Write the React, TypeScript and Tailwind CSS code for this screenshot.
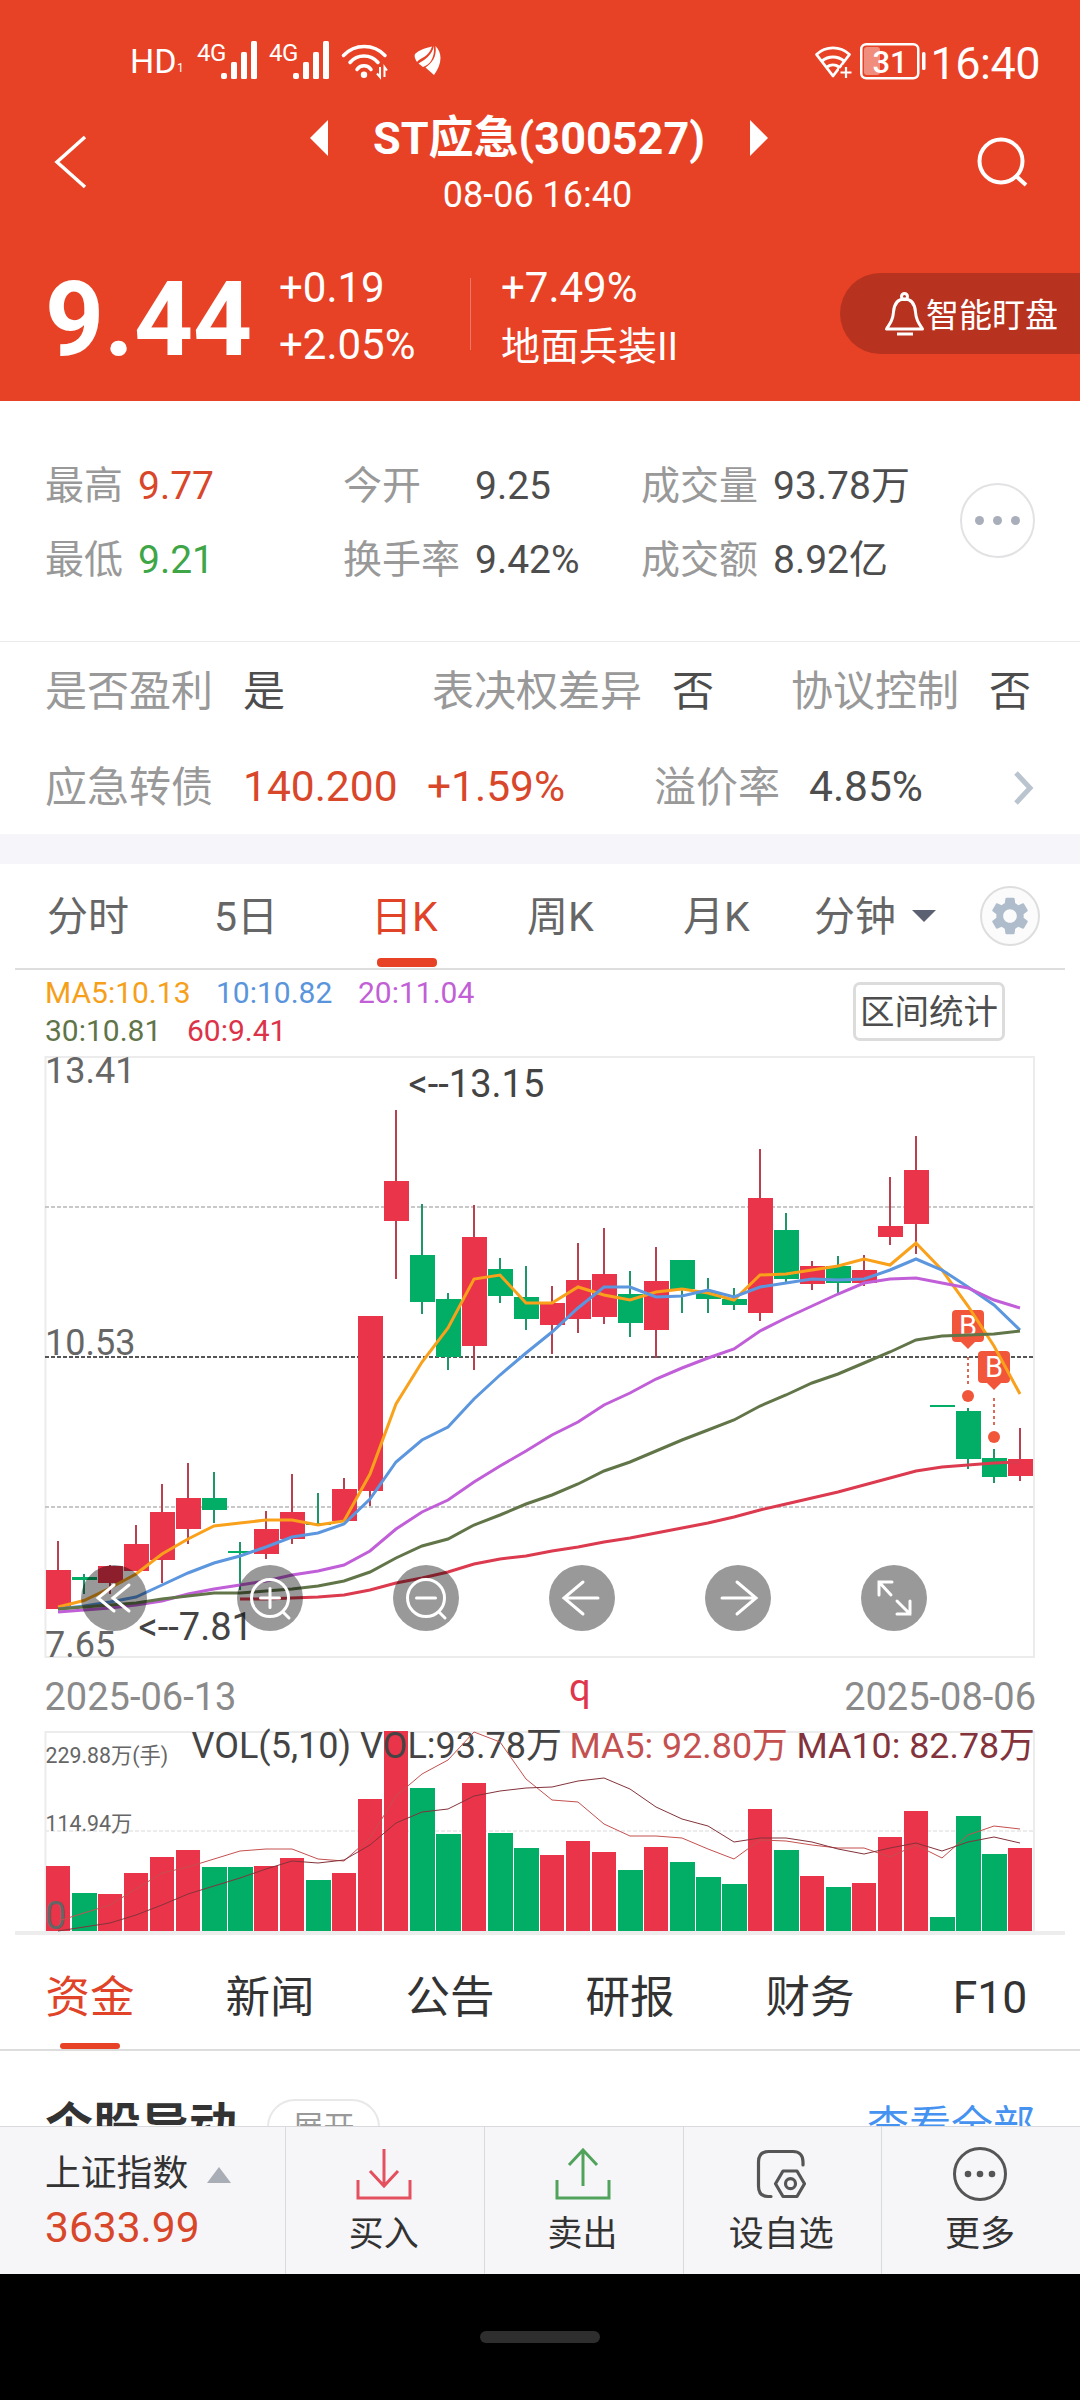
import type { ReactNode } from "react";

interface Candle {
  up: boolean;
  high: number;
  top: number;
  bottom: number;
  low: number;
  vol: number;
}

const RED = "#ea3449";
const GREEN = "#02ad66";
const STEP = 26;

// up, high, body top, body bottom, low, volume top (chart pixels)
const RAW: [number, number, number, number, number, number][] = [
  [1, 1541, 1570, 1609, 1609, 1866],
  [0, 1574, 1577, 1580, 1594, 1893],
  [1, 1565, 1566, 1583, 1594, 1894],
  [1, 1525, 1544, 1571, 1571, 1873],
  [1, 1484, 1512, 1560, 1583, 1857],
  [1, 1463, 1498, 1529, 1544, 1850],
  [0, 1472, 1498, 1510, 1523, 1867],
  [0, 1542, 1551, 1553, 1590, 1867],
  [1, 1511, 1529, 1554, 1559, 1866],
  [1, 1474, 1512, 1539, 1544, 1858],
  [0, 1493, 1523, 1525, 1525, 1880],
  [1, 1478, 1489, 1521, 1521, 1873],
  [1, 1316, 1316, 1491, 1506, 1799],
  [1, 1110, 1181, 1221, 1279, 1731],
  [0, 1204, 1255, 1302, 1314, 1788],
  [0, 1293, 1299, 1357, 1370, 1834],
  [1, 1205, 1237, 1346, 1370, 1783],
  [0, 1258, 1269, 1296, 1303, 1833],
  [0, 1266, 1297, 1319, 1330, 1848],
  [1, 1286, 1303, 1325, 1354, 1855],
  [1, 1243, 1280, 1319, 1333, 1841],
  [1, 1228, 1274, 1317, 1324, 1852],
  [0, 1271, 1294, 1323, 1337, 1870],
  [1, 1247, 1281, 1330, 1358, 1847],
  [0, 1260, 1260, 1289, 1313, 1862],
  [0, 1278, 1292, 1299, 1313, 1877],
  [0, 1288, 1299, 1305, 1310, 1884],
  [1, 1149, 1198, 1313, 1321, 1809],
  [0, 1213, 1230, 1279, 1282, 1850],
  [1, 1261, 1266, 1284, 1290, 1876],
  [0, 1256, 1266, 1283, 1294, 1887],
  [1, 1255, 1270, 1283, 1286, 1883],
  [1, 1177, 1226, 1237, 1245, 1837],
  [1, 1136, 1170, 1224, 1254, 1811],
  [0, 1405, 1405, 1407, 1407, 1917],
  [0, 1408, 1411, 1459, 1469, 1816],
  [0, 1449, 1458, 1477, 1483, 1854],
  [1, 1428, 1459, 1476, 1481, 1848],
];

const CANDLES: Candle[] = RAW.map(([up, high, top, bottom, low, vol]) => ({
  up: up === 1,
  high,
  top,
  bottom,
  low,
  vol,
}));

const MA5 = [1607, 1600.5, 1588, 1574, 1554, 1539, 1526, 1523, 1520, 1520, 1525, 1521, 1474, 1404, 1362, 1328, 1279, 1275, 1303, 1303, 1287, 1295, 1300, 1292, 1289, 1293, 1300, 1275, 1274, 1270, 1266, 1259, 1265, 1243, 1270, 1306, 1346, 1394];
const MA10 = [1609, 1606, 1602, 1597, 1585, 1573, 1563, 1556, 1547, 1537, 1533, 1524, 1499, 1462, 1440, 1427, 1399, 1375, 1353, 1332, 1308, 1287, 1287, 1297, 1296, 1290, 1297, 1287, 1283, 1279, 1280, 1279, 1270, 1259, 1270, 1287, 1305, 1330];
const MA20 = [1612, 1610, 1608, 1605, 1601, 1594, 1589, 1585, 1581, 1575, 1571, 1565, 1551, 1529, 1512, 1500, 1482, 1466, 1451, 1435, 1422, 1405, 1393, 1379, 1368, 1358, 1349, 1331, 1318, 1306, 1294, 1283, 1279, 1278, 1283, 1288, 1300, 1308];
const MA30 = [1609, 1607, 1605, 1603, 1599, 1596, 1593, 1593, 1591, 1589, 1586, 1581, 1572, 1558, 1546, 1539, 1525, 1515, 1504, 1495, 1484, 1471, 1462, 1451, 1440, 1430, 1420, 1406, 1395, 1383, 1374, 1363, 1352, 1340, 1336, 1335, 1334, 1331];
const MA60 = [1599, 1599, 1598, 1597, 1595, 1590, 1583, 1578, 1572, 1564, 1559, 1556, 1551, 1547, 1542, 1538, 1533, 1528, 1523, 1517, 1510, 1504, 1498, 1492, 1485, 1478, 1471, 1467, 1465, 1463, 1462];
const VOL5 = [1921, 1913, 1905, 1889, 1873, 1867, 1859, 1851, 1849, 1849, 1859, 1861, 1838, 1796, 1774, 1760, 1732, 1742, 1779, 1800, 1802, 1824, 1836, 1836, 1838, 1849, 1859, 1840, 1841, 1845, 1848, 1848, 1857, 1845, 1858, 1835, 1826, 1829];
const VOL10 = [1931, 1927, 1923, 1915, 1905, 1894, 1886, 1878, 1869, 1861, 1863, 1860, 1845, 1823, 1812, 1809, 1796, 1791, 1788, 1787, 1781, 1778, 1789, 1807, 1819, 1826, 1842, 1838, 1838, 1842, 1849, 1854, 1848, 1843, 1851, 1842, 1837, 1843];

const toPoints = (values: number[], start = 0) =>
  values.map((y, i) => `${58 + (i + start) * STEP},${y}`).join(" ");

function Signal() {
  return (
    <svg width="36" height="38" viewBox="0 0 36 38" fill="#fff">
      <rect x="0" y="32" width="6" height="6" rx="2" />
      <rect x="10" y="21" width="6" height="17" rx="1.500" />
      <rect x="20" y="11" width="6" height="27" rx="1.500" />
      <rect x="30" y="0" width="6" height="38" rx="1.500" />
    </svg>
  );
}

function StatusBar() {
  return (
    <div className="flex h-[120px] items-start pl-[130px] pr-[40px] text-white">
      <div className="mt-[44px] w-[47px] text-[34px] leading-[34px]">HD</div>
      <div className="mt-[62px] w-[8px] text-[12px] leading-[12px]">1</div>
      <div className="ml-[12px] mt-[41px] w-[24px] text-[24px] leading-[24px] tracking-[-0.5px]">4G</div>
      <div className="mt-[41px]">
        <Signal />
      </div>
      <div className="ml-[12px] mt-[41px] w-[24px] text-[24px] leading-[24px] tracking-[-0.5px]">4G</div>
      <div className="mt-[41px]">
        <Signal />
      </div>
      <svg className="ml-[11px] mt-[43px]" width="48" height="38" viewBox="0 0 48 38" fill="none" stroke="#fff" strokeWidth="3.500" strokeLinecap="round">
        <path d="M3.500 12.500a28.400 28.400 0 0 1 41.500 0" />
        <path d="M10 19.500a18.300 18.300 0 0 1 28 0" />
        <path d="M17 26.500a8.500 8.500 0 0 1 14 0" />
        <circle cx="24" cy="31.700" r="3.200" fill="#fff" stroke="none" />
        <path d="M40 24v10l-3-3.500M44.500 34V24l2.500 3.500" strokeWidth="2" strokeLinecap="butt" />
      </svg>
      <svg className="ml-[26px] mt-[46px]" width="27" height="30" viewBox="0 0 27 30" fill="#fff">
        <path d="M18 .500C10 2 4 5 1 8c-1 2 0 5 2 8 3-4 12-5 15-15.500z" />
        <path d="M20 0C18 9 11 14 4.500 17.500L9 21c6-2 12-8 11-21z" />
        <path d="M21.500 0C23 11 18 17 11.500 21.500L20 29c4-6 6.500-11 6.500-17 0-5-2-9-5-12z" />
      </svg>
      <div className="flex-1" />
      <svg className="mt-[44px]" width="40" height="36" viewBox="0 0 40 36" fill="none" stroke="#fff" strokeWidth="3">
        <path d="M2.500 10.500a24 24 0 0 1 33 0L19 32z" strokeLinejoin="round" strokeWidth="2.800" />
        <path d="M8 17a17 17 0 0 1 22 0M13 23a10 10 0 0 1 12 0" />
        <path d="M32 21v14M25 28h14" stroke="#e84226" strokeWidth="7" />
        <path d="M32 23v11M26.500 28.500h11" strokeWidth="2.200" />
      </svg>
      <svg className="ml-[6px] mt-[43px]" width="66" height="37" viewBox="0 0 66 37">
        <rect x="1.250" y="1.250" width="57" height="34" rx="5" fill="none" stroke="#fff" strokeWidth="2.500" />
        <rect x="4" y="4" width="16" height="28" rx="3" fill="#fff" fillOpacity=".4" />
        <rect x="62" y="9" width="3.500" height="18" rx="1.500" fill="#fff" />
        <text x="30" y="30" textAnchor="middle" fontSize="31" fontWeight="500" fill="#fff">31</text>
      </svg>
      <div className="ml-[4px] mt-[41px] text-[45px] leading-[45px] tracking-[-0.5px]">16:40</div>
    </div>
  );
}

function TitleBar() {
  return (
    <div className="flex h-[120px] items-start text-white">
      <svg className="ml-[54px] mt-[14px]" width="34" height="56" viewBox="0 0 34 56" fill="none" stroke="#fff" strokeWidth="3.500">
        <path d="M31 3 3 28l28 25" />
      </svg>
      <div className="ml-[222px] flex flex-col items-center">
        <div className="flex h-[36px] items-center">
          <svg width="18" height="36" viewBox="0 0 18 36" fill="#fff">
            <path d="M18 0v36L0 18z" />
          </svg>
          <h1 className="mx-[45px] text-[45px] font-bold leading-none">ST应急(300527)</h1>
          <svg width="18" height="36" viewBox="0 0 18 36" fill="#fff">
            <path d="M0 0v36l18-18z" />
          </svg>
        </div>
        <p className="mr-[3px] mt-[19px] text-[36px] leading-[40px]">08-06 16:40</p>
      </div>
      <svg className="ml-auto mr-[51px] mt-[17px]" width="52" height="52" viewBox="0 0 52 52" fill="none" stroke="#fff" strokeWidth="4">
        <circle cx="24" cy="24" r="21.500" />
        <path d="m39 39 10 9" />
      </svg>
    </div>
  );
}

function PriceBar() {
  return (
    <div className="flex h-[161px] items-start text-white">
      <div className="ml-[45px] mt-[28px] w-[234px] text-[103px] font-bold leading-[103px]">9.44</div>
      <div className="w-[191px]">
        <div className="mt-[24px] text-[42px] leading-[48px]">+0.19</div>
        <div className="mt-[9px] text-[42px] leading-[48px]">+2.05%</div>
      </div>
      <div className="mt-[38px] h-[72px] w-px bg-white/30" />
      <div className="ml-[30px]">
        <div className="mt-[24px] text-[42px] leading-[48px]">+7.49%</div>
        <div className="mt-[11px] text-[39px] leading-[48px]">地面兵装II</div>
      </div>
      <div className="flex-1" />
      <button className="mt-[33px] flex h-[81px] w-[240px] items-center rounded-l-full bg-[#b7331f] pl-[44px] text-[33px] leading-none">
        <svg className="mr-[1px]" width="41" height="44" viewBox="0 0 41 44" fill="none" stroke="#fff" strokeWidth="3">
          <circle cx="20.500" cy="4.500" r="3" />
          <path d="M20.500 7C12 7 10 14 9.500 20 9 27 7 30 2.500 37h36C34 30 32 27 31.500 20 31 14 29 7 20.500 7z" strokeLinejoin="round" />
          <path d="M13 42h16" />
        </svg>
        <span className="pt-[3px]">智能盯盘</span>
      </button>
    </div>
  );
}

function Stat({ label, value, labelClass, color }: { label: string; value: string; labelClass: string; color?: string }) {
  return (
    <div className="flex h-[74px] items-center">
      <span className={`text-[#999] ${labelClass}`}>{label}</span>
      <span className={color ?? "text-[#4d4d4d]"}>{value}</span>
    </div>
  );
}

function Quote() {
  return (
    <section className="flex h-[241px] items-start border-b border-[#ebebeb] pl-[45px] pt-[48px] text-[39px] leading-none">
      <div className="w-[298px]">
        <Stat label="最高" value="9.77" labelClass="w-[93px]" color="text-[#d9472b]" />
        <Stat label="最低" value="9.21" labelClass="w-[93px]" color="text-[#3fa648]" />
      </div>
      <div className="w-[298px]">
        <Stat label="今开" value="9.25" labelClass="w-[132px]" />
        <Stat label="换手率" value="9.42%" labelClass="w-[132px]" />
      </div>
      <div className="w-[319px]">
        <Stat label="成交量" value="93.78万" labelClass="w-[132px]" />
        <Stat label="成交额" value="8.92亿" labelClass="w-[132px]" />
      </div>
      <button className="mt-[34px] flex size-[75px] items-center justify-center gap-[9px] rounded-full border-2 border-[#e2e2e4]">
        <span className="size-[9px] rounded-full bg-[#a9afba]" />
        <span className="size-[9px] rounded-full bg-[#a9afba]" />
        <span className="size-[9px] rounded-full bg-[#a9afba]" />
      </button>
    </section>
  );
}

function Facts() {
  return (
    <section className="h-[192px] pl-[45px] text-[42px] leading-none text-[#999]">
      <div className="flex h-[99px] items-center">
        <span className="w-[198px]">是否盈利</span>
        <span className="w-[189px] text-[#4d4d4d]">是</span>
        <span className="w-[240px]">表决权差异</span>
        <span className="w-[119px] text-[#4d4d4d]">否</span>
        <span className="w-[198px]">协议控制</span>
        <span className="text-[#4d4d4d]">否</span>
      </div>
      <div className="flex h-[93px] items-center">
        <span className="w-[198px]">应急转债</span>
        <span className="w-[184px] text-[42.500px] text-[#d9472b]">140.200</span>
        <span className="w-[227px] text-[42.500px] text-[#d9472b]">+1.59%</span>
        <span className="w-[155px]">溢价率</span>
        <span className="w-[205px] text-[42.500px] text-[#4d4d4d]">4.85%</span>
        <svg width="20" height="34" viewBox="0 0 20 34" fill="none" stroke="#b9c4cf" strokeWidth="5">
          <path d="m2 2 14 15L2 32" />
        </svg>
      </div>
    </section>
  );
}

function PeriodTabs() {
  return (
    <nav className="mx-[15px] flex h-[106px] items-center border-b-2 border-[#dedede] text-[41px] leading-none text-[#666]">
      <span className="ml-[32px] w-[167px] pt-[3px]">分时</span>
      <span className="w-[157px] pt-[3px]">5日</span>
      <span className="relative w-[156px] pt-[3px] text-[#e04327]">
        日K
        <i className="absolute left-[6px] top-[64px] h-[9px] w-[60px] rounded-[4px] bg-[#e84226]" />
      </span>
      <span className="w-[156px] pt-[3px]">周K</span>
      <span className="w-[131px] pt-[3px]">月K</span>
      <span className="w-[98px] pt-[3px]">分钟</span>
      <svg width="24" height="12" viewBox="0 0 24 12" fill="#5b6073">
        <path d="M0 0h24L12 12z" />
      </svg>
      <button className="ml-[44px] flex size-[60px] items-center justify-center rounded-full border-2 border-[#dedede] bg-[#fbfbfb]">
        <svg width="38" height="38" viewBox="2 2 20 20" fill="#aebccc">
          <path d="M19.140 12.940c.040-.300.060-.610.060-.940 0-.320-.020-.640-.070-.940l2.030-1.580a.490.490 0 0 0 .120-.610l-1.920-3.320a.488.488 0 0 0-.590-.220l-2.390.960c-.500-.380-1.030-.700-1.620-.940l-.360-2.540a.484.484 0 0 0-.480-.410h-3.840c-.240 0-.430.170-.470.410l-.360 2.540c-.590.240-1.130.570-1.620.940l-2.390-.960c-.220-.080-.470 0-.590.220L2.740 8.870c-.120.210-.080.470.120.610l2.030 1.580c-.050.300-.090.630-.090.940s.020.640.070.940l-2.030 1.580a.490.490 0 0 0-.120.610l1.920 3.320c.120.220.370.290.590.220l2.390-.960c.500.380 1.030.700 1.620.940l.360 2.540c.050.240.240.410.480.410h3.840c.240 0 .440-.170.470-.410l.360-2.540c.590-.240 1.130-.560 1.620-.940l2.390.960c.220.080.470 0 .590-.220l1.920-3.320c.120-.220.070-.470-.120-.610l-2.010-1.580zM12 15.600c-1.980 0-3.600-1.620-3.600-3.600s1.620-3.600 3.600-3.600 3.600 1.620 3.600 3.600-1.620 3.600-3.600 3.600z" />
        </svg>
      </button>
    </nav>
  );
}

function Legend() {
  return (
    <div className="flex h-[80px] items-start justify-between pl-[45px] pr-[75px] text-[30px] leading-[38px]">
      <div className="pt-[4px]">
        <div className="flex">
          <span className="w-[171px] text-[#f6a01a]">MA5:10.13</span>
          <span className="w-[142px] text-[#5a95dc]">10:10.82</span>
          <span className="text-[#c25fd6]">20:11.04</span>
        </div>
        <div className="flex">
          <span className="w-[142px] text-[#5f7549]">30:10.81</span>
          <span className="text-[#dc3349]">60:9.41</span>
        </div>
      </div>
      <button className="mt-[12px] flex h-[59px] w-[152px] items-center justify-center rounded-[7px] border-[3px] border-[#dcdcdc] pt-[1px] text-[34.500px] leading-none text-[#4d4d4d]">
        区间统计
      </button>
    </div>
  );
}

function Marker({ x, y }: { x: number; y: number }) {
  return (
    <g>
      <rect x={x - 16} y={y} width="32" height="32" rx="4" fill="#f1563b" />
      <path d={`M${x - 8} ${y + 31}h16l-8 8z`} fill="#f1563b" />
      <text x={x} y={y + 26} textAnchor="middle" fontSize="29" fill="#fff">B</text>
      <path d={`M${x} ${y + 47}v28`} stroke="#dd6a55" strokeWidth="2" strokeDasharray="3 3" />
      <circle cx={x} cy={y + 86} r="6" fill="#f1563b" />
    </g>
  );
}

function RoundButton({ children }: { children: ReactNode }) {
  return (
    <button className="flex size-[66px] items-center justify-center rounded-full bg-black/40">
      <svg width="66" height="66" viewBox="-33 -33 66 66" fill="none" stroke="#fff" strokeWidth="3" strokeLinecap="round">
        {children}
      </svg>
    </button>
  );
}

function Charts() {
  return (
    <div className="relative h-[886px]">
      <svg className="block" width="1080" height="886" viewBox="0 1050 1080 886">
        <g fill="none" stroke="#ececec" strokeWidth="2">
          <rect x="45.500" y="1057" width="988.500" height="600" />
          <path d="M45.500 1931V1732H1034v199" />
          <path d="M45 1831h989" strokeDasharray="4 2" />
        </g>
        <path d="M45 1207h989M45 1507h989" stroke="#c8c8c8" strokeWidth="2" strokeDasharray="4 2" />
        <path d="M45 1357h989" stroke="#555" strokeWidth="2" strokeDasharray="4 2" />

        <g fontSize="36" fill="#666">
          <text x="45" y="1083">13.41</text>
          <text x="45" y="1355">10.53</text>
          <text x="45" y="1657">7.65</text>
        </g>

        {CANDLES.map((c, i) => (
          <g key={i}>
            <rect x={57 + i * STEP} y={c.high} width="2" height={c.low - c.high} fill={c.up ? "#b9404f" : "#1f9668"} />
            <rect x={46 + i * STEP} y={c.top} width="25" height={c.bottom - c.top} fill={c.up ? RED : GREEN} />
          </g>
        ))}

        <Marker x={968} y={1310} />
        <Marker x={994} y={1351} />

        <g fill="none" strokeWidth="3">
          <polyline points={toPoints(MA5)} stroke="#f9a11b" />
          <polyline points={toPoints(MA10)} stroke="#5b96de" />
          <polyline points={toPoints(MA20)} stroke="#c15fd8" />
          <polyline points={toPoints(MA30)} stroke="#617549" />
          <polyline points={toPoints(MA60, 7)} stroke="#dc3a4e" />
        </g>

        <g fontSize="38" fill="#444">
          <text x="408.500" y="1097">&lt;--13.15</text>
          <text x="138.500" y="1640">&lt;--7.81</text>
        </g>

        <g fontSize="38" fill="#8a8a8a">
          <text x="44.500" y="1710">2025-06-13</text>
          <text x="1036" y="1710" textAnchor="end">2025-08-06</text>
          <text x="569" y="1701" fill="#e0364c">q</text>
        </g>

        {CANDLES.map((c, i) => (
          <rect key={i} x={46 + i * STEP} y={c.vol} width={c.up ? 24 : 25} height={1931 - c.vol} fill={c.up ? RED : GREEN} />
        ))}
        <rect x="15" y="1931" width="1050" height="4" fill="#ededed" />

        <g fill="#666">
          <text x="45.500" y="1763" fontSize="21.300">229.88万(手)</text>
          <text x="45.500" y="1831" fontSize="21.300">114.94万</text>
          <text x="45" y="1929" fontSize="38">0</text>
        </g>
        <g fontSize="35.800">
          <text x="191.500" y="1758" fontSize="36" fill="#444">VOL(5,10) VOL:93.78万</text>
          <text x="569.500" y="1758" fill="#c4504f">MA5: 92.80万</text>
          <text x="796.500" y="1758" fill="#83333b">MA10: 82.78万</text>
        </g>
        <g fill="none" strokeWidth="1">
          <polyline points={toPoints(VOL5)} stroke="#c4504f" />
          <polyline points={toPoints(VOL10)} stroke="#83333b" />
        </g>
      </svg>

      <div className="absolute left-[81px] top-[515px] flex gap-[90px]">
        <RoundButton>
          <path d="M0-13-16 0 0 13M15-13-1 0l16 13" />
        </RoundButton>
        <RoundButton>
          <circle r="18.500" />
          <path d="M-9.500 0h19M0-9.500v19M13 14l6 6" />
        </RoundButton>
        <RoundButton>
          <circle r="18.500" />
          <path d="M-9.500 0h19M13 14l6 6" />
        </RoundButton>
        <RoundButton>
          <path d="M16 0h-34M1-16-18 0 1 16" />
        </RoundButton>
        <RoundButton>
          <path d="M-16 0h34M-1-16 18 0-1 16" />
        </RoundButton>
        <RoundButton>
          <path d="M-3-3-15-16m0 13v-13h13M3 3l13 13M16 3v13H3" />
        </RoundButton>
      </div>
    </div>
  );
}

function InfoTabs() {
  return (
    <nav className="grid h-[115px] grid-cols-6 border-b-2 border-[#dddddd] pt-[32px] text-center text-[44.500px] leading-[60px] text-[#333]">
      <span className="relative text-[#e04327]">
        资金
        <i className="absolute left-[60px] top-[75px] h-[6px] w-[60px] rounded-[3px] bg-[#e84226]" />
      </span>
      <span>新闻</span>
      <span>公告</span>
      <span>研报</span>
      <span>财务</span>
      <span>F10</span>
    </nav>
  );
}

function Events() {
  return (
    <section className="flex h-[75px] items-start overflow-hidden pl-[45px] pr-[45px]">
      <h2 className="mt-[47px] text-[48px] font-bold leading-[56px] text-[#333]">个股异动</h2>
      <span className="ml-[30px] mt-[48px] flex h-[56px] w-[113px] items-center justify-center rounded-full border-2 border-[#e8e8e8] text-[31px] leading-none text-[#999]">
        展开
      </span>
      <span className="ml-auto mt-[52px] text-[42px] leading-[48px] text-[#4592f0]">查看全部</span>
    </section>
  );
}

function Action({ label, children }: { label: string; children: ReactNode }) {
  return (
    <button className="flex flex-1 flex-col items-center border-l border-[#d9dade] pr-[2px] pt-[19px] text-[35px] leading-[40px] text-[#333]">
      <span className="flex h-[56px] items-center">{children}</span>
      <span className="mt-[13px]">{label}</span>
    </button>
  );
}

function BottomBar() {
  return (
    <footer className="flex h-[148px] border-t border-[#d9dade] bg-[#f6f6f9]">
      <div className="w-[285px] pl-[45px]">
        <div className="mt-[26px] flex h-[44px] items-center text-[35.800px] leading-none text-[#333]">
          上证指数
          <svg className="ml-[19px]" width="24" height="16" viewBox="0 0 24 16" fill="#a9adb5">
            <path d="M0 16h24L12 0z" />
          </svg>
        </div>
        <div className="mt-[7px] text-[42.500px] leading-[48px] text-[#d9472b]">3633.99</div>
      </div>
      <Action label="买入">
        <svg width="56" height="52" viewBox="0 0 56 52" fill="none" stroke="#e4505e" strokeWidth="3">
          <path d="M28 1v37M14 23l14 15 14-15M2 32v18h52V32" />
        </svg>
      </Action>
      <Action label="卖出">
        <svg width="56" height="52" viewBox="0 0 56 52" fill="none" stroke="#51a35c" strokeWidth="3">
          <path d="M28 38V2M14 17 28 2l14 15M2 32v18h52V32" />
        </svg>
      </Action>
      <Action label="设自选">
        <svg width="50" height="50" viewBox="0 0 50 50" fill="none" stroke="#555" strokeWidth="3.200" strokeLinecap="round" strokeLinejoin="round">
          <path d="M47 16V13C47 6 43 2.500 37 2.500H13C6 2.500 2.500 6 2.500 13v24C2.500 44 6 47.500 12 47.500h3" />
          <path d="M27 22h14l7.500 12.700L41 47.500H27l-7.500-12.800z" />
          <circle cx="34.500" cy="34.700" r="5" />
        </svg>
      </Action>
      <Action label="更多">
        <svg width="56" height="56" viewBox="0 0 56 56" fill="#555">
          <circle cx="28" cy="28" r="25.500" fill="none" stroke="#555" strokeWidth="3" />
          <circle cx="16" cy="28" r="3.300" />
          <circle cx="28" cy="28" r="3.300" />
          <circle cx="40" cy="28" r="3.300" />
        </svg>
      </Action>
    </footer>
  );
}

export default function App() {
  return (
    <div className="h-[2400px] w-[1080px] overflow-hidden bg-white font-['Roboto','Noto_Sans_CJK_SC',sans-serif]">
      <header className="h-[401px] bg-[#e84226]">
        <StatusBar />
        <TitleBar />
        <PriceBar />
      </header>
      <Quote />
      <Facts />
      <div className="h-[30px] bg-[#f5f5fa]" />
      <PeriodTabs />
      <Legend />
      <Charts />
      <InfoTabs />
      <Events />
      <BottomBar />
      <div className="flex h-[126px] justify-center bg-black pt-[57px]">
        <div className="h-[12px] w-[120px] rounded-full bg-[#2e2e2e]" />
      </div>
    </div>
  );
}
